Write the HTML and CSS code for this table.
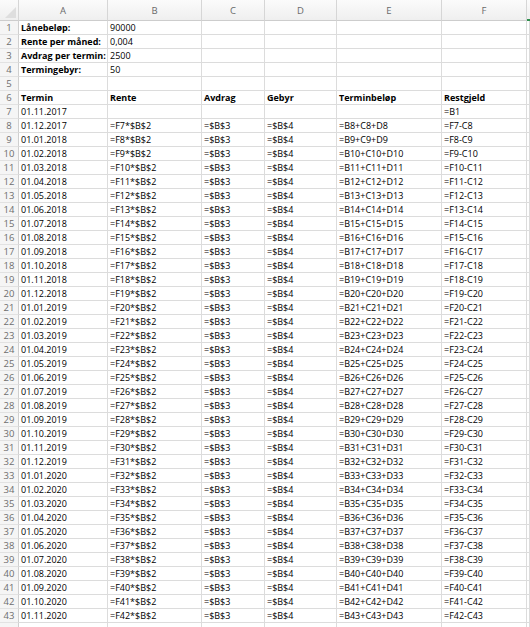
FILE: index.html
```html
<!DOCTYPE html>
<html lang="no">
<head>
<meta charset="utf-8">
<title>Nedbetalingsplan</title>
<link rel="stylesheet" href="styles.css">
</head>
<body>
<table class="sheet">
<colgroup>
<col class="w-rh"><col class="w-a"><col class="w-b"><col class="w-c"><col class="w-d"><col class="w-e"><col class="w-f"><col class="w-g">
</colgroup>
<thead>
<tr class="colhead"><th class="corner"><span class="tri"></span></th><th>A</th><th>B</th><th>C</th><th>D</th><th>E</th><th>F</th><th class="sel"></th></tr>
</thead>
<tbody>
<tr><th>1</th><td class="b">Lånebeløp:</td><td>90000</td><td></td><td></td><td></td><td></td><td></td></tr>
<tr><th>2</th><td class="b">Rente per måned:</td><td>0,004</td><td></td><td></td><td></td><td></td><td></td></tr>
<tr><th>3</th><td class="b">Avdrag per termin:</td><td>2500</td><td></td><td></td><td></td><td></td><td></td></tr>
<tr><th>4</th><td class="b">Termingebyr:</td><td>50</td><td></td><td></td><td></td><td></td><td></td></tr>
<tr><th>5</th><td></td><td></td><td></td><td></td><td></td><td></td><td></td></tr>
<tr><th>6</th><td class="b">Termin</td><td class="b">Rente</td><td class="b">Avdrag</td><td class="b">Gebyr</td><td class="b">Terminbeløp</td><td class="b">Restgjeld</td><td></td></tr>
<tr><th>7</th><td>01.11.2017</td><td></td><td></td><td></td><td></td><td>=B1</td><td></td></tr>
<tr><th>8</th><td>01.12.2017</td><td>=F7*$B$2</td><td>=$B$3</td><td>=$B$4</td><td>=B8+C8+D8</td><td>=F7-C8</td><td></td></tr>
<tr><th>9</th><td>01.01.2018</td><td>=F8*$B$2</td><td>=$B$3</td><td>=$B$4</td><td>=B9+C9+D9</td><td>=F8-C9</td><td></td></tr>
<tr><th>10</th><td>01.02.2018</td><td>=F9*$B$2</td><td>=$B$3</td><td>=$B$4</td><td>=B10+C10+D10</td><td>=F9-C10</td><td></td></tr>
<tr><th>11</th><td>01.03.2018</td><td>=F10*$B$2</td><td>=$B$3</td><td>=$B$4</td><td>=B11+C11+D11</td><td>=F10-C11</td><td></td></tr>
<tr><th>12</th><td>01.04.2018</td><td>=F11*$B$2</td><td>=$B$3</td><td>=$B$4</td><td>=B12+C12+D12</td><td>=F11-C12</td><td></td></tr>
<tr><th>13</th><td>01.05.2018</td><td>=F12*$B$2</td><td>=$B$3</td><td>=$B$4</td><td>=B13+C13+D13</td><td>=F12-C13</td><td></td></tr>
<tr><th>14</th><td>01.06.2018</td><td>=F13*$B$2</td><td>=$B$3</td><td>=$B$4</td><td>=B14+C14+D14</td><td>=F13-C14</td><td></td></tr>
<tr><th>15</th><td>01.07.2018</td><td>=F14*$B$2</td><td>=$B$3</td><td>=$B$4</td><td>=B15+C15+D15</td><td>=F14-C15</td><td></td></tr>
<tr><th>16</th><td>01.08.2018</td><td>=F15*$B$2</td><td>=$B$3</td><td>=$B$4</td><td>=B16+C16+D16</td><td>=F15-C16</td><td></td></tr>
<tr><th>17</th><td>01.09.2018</td><td>=F16*$B$2</td><td>=$B$3</td><td>=$B$4</td><td>=B17+C17+D17</td><td>=F16-C17</td><td></td></tr>
<tr><th>18</th><td>01.10.2018</td><td>=F17*$B$2</td><td>=$B$3</td><td>=$B$4</td><td>=B18+C18+D18</td><td>=F17-C18</td><td></td></tr>
<tr><th>19</th><td>01.11.2018</td><td>=F18*$B$2</td><td>=$B$3</td><td>=$B$4</td><td>=B19+C19+D19</td><td>=F18-C19</td><td></td></tr>
<tr><th>20</th><td>01.12.2018</td><td>=F19*$B$2</td><td>=$B$3</td><td>=$B$4</td><td>=B20+C20+D20</td><td>=F19-C20</td><td></td></tr>
<tr><th>21</th><td>01.01.2019</td><td>=F20*$B$2</td><td>=$B$3</td><td>=$B$4</td><td>=B21+C21+D21</td><td>=F20-C21</td><td></td></tr>
<tr><th>22</th><td>01.02.2019</td><td>=F21*$B$2</td><td>=$B$3</td><td>=$B$4</td><td>=B22+C22+D22</td><td>=F21-C22</td><td></td></tr>
<tr><th>23</th><td>01.03.2019</td><td>=F22*$B$2</td><td>=$B$3</td><td>=$B$4</td><td>=B23+C23+D23</td><td>=F22-C23</td><td></td></tr>
<tr><th>24</th><td>01.04.2019</td><td>=F23*$B$2</td><td>=$B$3</td><td>=$B$4</td><td>=B24+C24+D24</td><td>=F23-C24</td><td></td></tr>
<tr><th>25</th><td>01.05.2019</td><td>=F24*$B$2</td><td>=$B$3</td><td>=$B$4</td><td>=B25+C25+D25</td><td>=F24-C25</td><td></td></tr>
<tr><th>26</th><td>01.06.2019</td><td>=F25*$B$2</td><td>=$B$3</td><td>=$B$4</td><td>=B26+C26+D26</td><td>=F25-C26</td><td></td></tr>
<tr><th>27</th><td>01.07.2019</td><td>=F26*$B$2</td><td>=$B$3</td><td>=$B$4</td><td>=B27+C27+D27</td><td>=F26-C27</td><td></td></tr>
<tr><th>28</th><td>01.08.2019</td><td>=F27*$B$2</td><td>=$B$3</td><td>=$B$4</td><td>=B28+C28+D28</td><td>=F27-C28</td><td></td></tr>
<tr><th>29</th><td>01.09.2019</td><td>=F28*$B$2</td><td>=$B$3</td><td>=$B$4</td><td>=B29+C29+D29</td><td>=F28-C29</td><td></td></tr>
<tr><th>30</th><td>01.10.2019</td><td>=F29*$B$2</td><td>=$B$3</td><td>=$B$4</td><td>=B30+C30+D30</td><td>=F29-C30</td><td></td></tr>
<tr><th>31</th><td>01.11.2019</td><td>=F30*$B$2</td><td>=$B$3</td><td>=$B$4</td><td>=B31+C31+D31</td><td>=F30-C31</td><td></td></tr>
<tr><th>32</th><td>01.12.2019</td><td>=F31*$B$2</td><td>=$B$3</td><td>=$B$4</td><td>=B32+C32+D32</td><td>=F31-C32</td><td></td></tr>
<tr><th>33</th><td>01.01.2020</td><td>=F32*$B$2</td><td>=$B$3</td><td>=$B$4</td><td>=B33+C33+D33</td><td>=F32-C33</td><td></td></tr>
<tr><th>34</th><td>01.02.2020</td><td>=F33*$B$2</td><td>=$B$3</td><td>=$B$4</td><td>=B34+C34+D34</td><td>=F33-C34</td><td></td></tr>
<tr><th>35</th><td>01.03.2020</td><td>=F34*$B$2</td><td>=$B$3</td><td>=$B$4</td><td>=B35+C35+D35</td><td>=F34-C35</td><td></td></tr>
<tr><th>36</th><td>01.04.2020</td><td>=F35*$B$2</td><td>=$B$3</td><td>=$B$4</td><td>=B36+C36+D36</td><td>=F35-C36</td><td></td></tr>
<tr><th>37</th><td>01.05.2020</td><td>=F36*$B$2</td><td>=$B$3</td><td>=$B$4</td><td>=B37+C37+D37</td><td>=F36-C37</td><td></td></tr>
<tr><th>38</th><td>01.06.2020</td><td>=F37*$B$2</td><td>=$B$3</td><td>=$B$4</td><td>=B38+C38+D38</td><td>=F37-C38</td><td></td></tr>
<tr><th>39</th><td>01.07.2020</td><td>=F38*$B$2</td><td>=$B$3</td><td>=$B$4</td><td>=B39+C39+D39</td><td>=F38-C39</td><td></td></tr>
<tr><th>40</th><td>01.08.2020</td><td>=F39*$B$2</td><td>=$B$3</td><td>=$B$4</td><td>=B40+C40+D40</td><td>=F39-C40</td><td></td></tr>
<tr><th>41</th><td>01.09.2020</td><td>=F40*$B$2</td><td>=$B$3</td><td>=$B$4</td><td>=B41+C41+D41</td><td>=F40-C41</td><td></td></tr>
<tr><th>42</th><td>01.10.2020</td><td>=F41*$B$2</td><td>=$B$3</td><td>=$B$4</td><td>=B42+C42+D42</td><td>=F41-C42</td><td></td></tr>
<tr><th>43</th><td>01.11.2020</td><td>=F42*$B$2</td><td>=$B$3</td><td>=$B$4</td><td>=B43+C43+D43</td><td>=F42-C43</td><td></td></tr>
<tr class="partial"><th></th><td></td><td></td><td></td><td></td><td></td><td></td><td></td></tr>
</tbody>
</table>
</body>
</html>
```

FILE: styles.css
```css
html, body {
  margin: 0;
  padding: 0;
  background: #ffffff;
  overflow: hidden;
  width: 530px;
  height: 627px;
}

.sheet {
  table-layout: fixed;
  border-collapse: separate;
  border-spacing: 0;
  width: 530px;
  font-family: "Open Sans", "Liberation Sans", sans-serif;
  font-size: 9px;
  color: #000;
}

.w-rh { width: 19px; }
.w-a { width: 89px; }
.w-b { width: 94px; }
.w-c { width: 63px; }
.w-d { width: 72px; }
.w-e { width: 105px; }
.w-f { width: 85px; }
.w-g { width: 3px; }

.sheet td {
  height: 13px;
  line-height: 13px;
  padding: 0 0 0 2px;
  border-right: 1px solid #dcdcdc;
  border-bottom: 1px solid #dcdcdc;
  white-space: nowrap;
  overflow: hidden;
  vertical-align: middle;
}

.sheet td.b {
  font-weight: 700;
}

.sheet tbody th {
  height: 13px;
  line-height: 13px;
  padding: 0;
  font-weight: 400;
  font-size: 9.5px;
  color: #6e6e6e;
  text-align: center;
  background: #f5f5f5;
  border-right: 1px solid #cfcfcf;
  border-bottom: 1px solid #e2e2e2;
}

.colhead th {
  height: 19px;
  padding: 0;
  font-weight: 400;
  font-size: 9.5px;
  color: #6a6a6a;
  text-align: center;
  background: linear-gradient(#fbfbfb, #efefef);
  border-right: 1px solid #d6d6d6;
  border-bottom: 1px solid #cdcdcd;
}

.colhead th.sel {
  border-right: none;
  border-bottom: 2px solid #2f8f4e;
}

.corner {
  position: relative;
}

.tri {
  position: absolute;
  right: 2px;
  bottom: 2px;
  width: 0;
  height: 0;
  border-left: 11px solid transparent;
  border-bottom: 11px solid #dedede;
}
```
